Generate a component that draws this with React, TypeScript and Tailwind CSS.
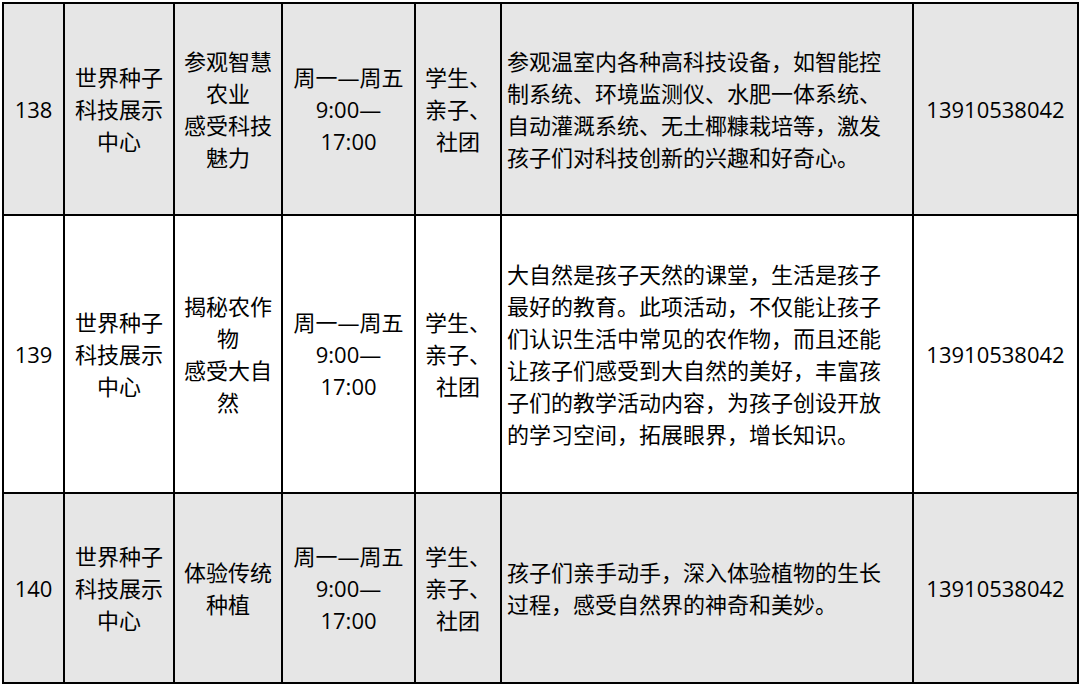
import React from 'react';

type Row = {
  id: string;
  place: string[];
  title: string[];
  time: string[];
  who: string[];
  desc: string[];
  phone: string;
  shaded: boolean;
  height: string;
};

const rows: Row[] = [
  {
    id: '138',
    place: ['世界种子', '科技展示', '中心'],
    title: ['参观智慧', '农业', '感受科技', '魅力'],
    time: ['周一—周五', '9:00—', '17:00'],
    who: ['学生、', '亲子、', '社团'],
    desc: [
      '参观温室内各种高科技设备，如智能控',
      '制系统、环境监测仪、水肥一体系统、',
      '自动灌溉系统、无土椰糠栽培等，激发',
      '孩子们对科技创新的兴趣和好奇心。',
    ],
    phone: '13910538042',
    shaded: true,
    height: 'h-[212px]',
  },
  {
    id: '139',
    place: ['世界种子', '科技展示', '中心'],
    title: ['揭秘农作', '物', '感受大自', '然'],
    time: ['周一—周五', '9:00—', '17:00'],
    who: ['学生、', '亲子、', '社团'],
    desc: [
      '大自然是孩子天然的课堂，生活是孩子',
      '最好的教育。此项活动，不仅能让孩子',
      '们认识生活中常见的农作物，而且还能',
      '让孩子们感受到大自然的美好，丰富孩',
      '子们的教学活动内容，为孩子创设开放',
      '的学习空间，拓展眼界，增长知识。',
    ],
    phone: '13910538042',
    shaded: false,
    height: 'h-[278px]',
  },
  {
    id: '140',
    place: ['世界种子', '科技展示', '中心'],
    title: ['体验传统', '种植'],
    time: ['周一—周五', '9:00—', '17:00'],
    who: ['学生、', '亲子、', '社团'],
    desc: ['孩子们亲手动手，深入体验植物的生长', '过程，感受自然界的神奇和美妙。'],
    phone: '13910538042',
    shaded: true,
    height: 'h-[190px]',
  },
];

const Lines = ({ lines }: { lines: string[] }) => (
  <>
    {lines.map((l, i) => (
      <div key={i}>{l}</div>
    ))}
  </>
);

const Cell = ({ children, left }: { children: React.ReactNode; left?: boolean }) => (
  <div
    className={`flex flex-col justify-center border-r-2 border-b-2 border-black ${
      left ? 'items-start pl-[5px] text-left' : 'items-center text-center'
    }`}
  >
    {children}
  </div>
);

export default function App() {
  return (
    <div className="w-[1080px] h-[685px] bg-white pt-[2px] pl-[2px]">
      <div
        className="w-[1077px] border-l-2 border-t-2 border-black text-[22px] leading-[32px] text-black"
        style={{ fontFamily: '"Open Sans", "Noto Sans CJK SC", sans-serif' }}
      >
        {rows.map((r) => (
          <div
            key={r.id}
            className={`grid grid-cols-[61px_110px_108px_133px_86px_412px_165px] ${r.height} ${
              r.shaded ? 'bg-[#e6e6e6]' : 'bg-white'
            }`}
          >
            <Cell>{r.id}</Cell>
            <Cell>
              <Lines lines={r.place} />
            </Cell>
            <Cell>
              <Lines lines={r.title} />
            </Cell>
            <Cell>
              <Lines lines={r.time} />
            </Cell>
            <Cell>
              <Lines lines={r.who} />
            </Cell>
            <Cell left>
              <Lines lines={r.desc} />
            </Cell>
            <Cell>{r.phone}</Cell>
          </div>
        ))}
      </div>
    </div>
  );
}
